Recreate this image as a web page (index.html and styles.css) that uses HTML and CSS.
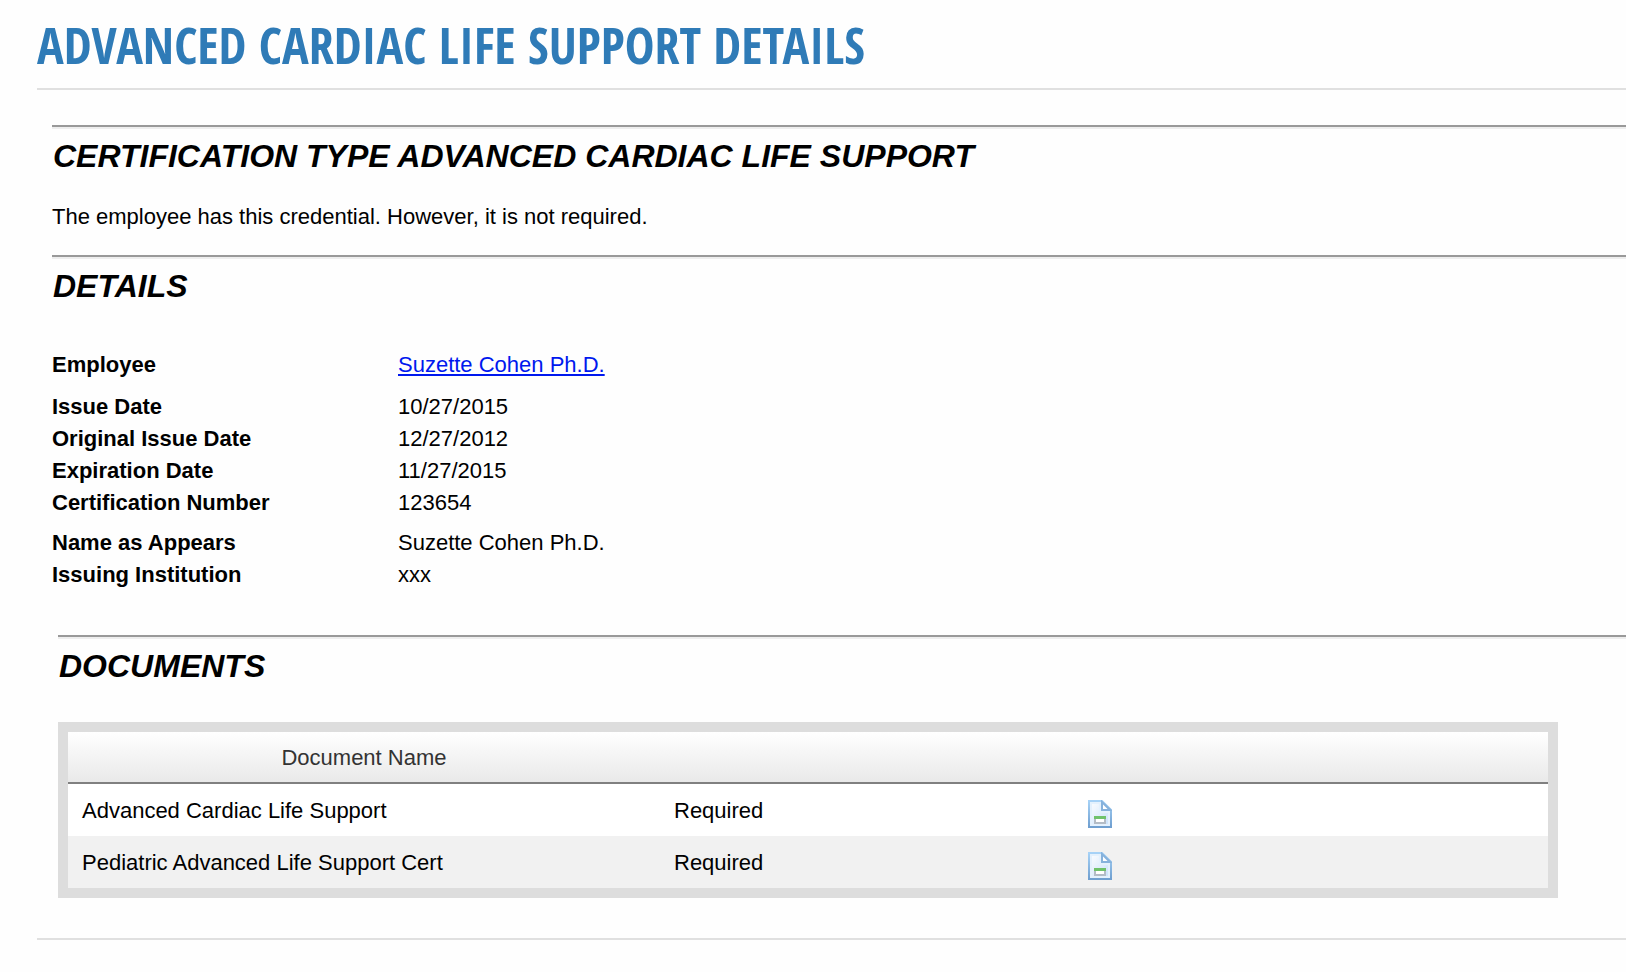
FILE: index.html
```html
<!DOCTYPE html>
<html lang="en">
<head>
    <meta charset="utf-8">
    <meta name="viewport" content="width=device-width, initial-scale=1.0">
    <title>Advanced Cardiac Life Support Details</title>
    <link rel="stylesheet" href="styles.css">
</head>
<body>
    <!-- shared icon, used once per document row -->
    <svg class="sprite" aria-hidden="true">
        <defs>
            <linearGradient id="edge" x1="0" y1="0" x2="0" y2="1">
                <stop offset="0" stop-color="#a6d2f7"/>
                <stop offset="1" stop-color="#6f9fd0"/>
            </linearGradient>
            <linearGradient id="sheet" x1="0" y1="0" x2="1" y2="1">
                <stop offset="0" stop-color="#ffffff"/>
                <stop offset="1" stop-color="#c4defa"/>
            </linearGradient>
        </defs>
        <symbol id="doc" viewBox="0 0 24 28">
            <path d="M1 1H14L23 10V27H1Z" fill="url(#sheet)" stroke="url(#edge)" stroke-width="2"/>
            <path d="M3 26V3H12V12H21V25H3" fill="none" stroke="#e4f1fd" stroke-width="2"/>
            <path d="M14 2V10H22Z" fill="#fff" stroke="#86b2dc" stroke-width="2"/>
            <rect x="7" y="17" width="10" height="6" fill="#fff" stroke="#b3bcc6" stroke-width="2"/>
            <rect x="6" y="16" width="12" height="3" fill="#6fc26b"/>
        </symbol>
    </svg>
    <div class="page">
        <h1 class="title">ADVANCED CARDIAC LIFE SUPPORT DETAILS</h1>
        <div class="content">
            <div class="section">
                <h2>CERTIFICATION TYPE ADVANCED CARDIAC LIFE SUPPORT</h2>
                <p>The employee has this credential. However, it is not required.</p>
            </div>
            <div class="section">
                <h2>DETAILS</h2>
                <dl class="details">
                    <div class="first"><dt>Employee</dt><dd><a href="#">Suzette Cohen Ph.D.</a></dd></div>
                    <div><dt>Issue Date</dt><dd>10/27/2015</dd></div>
                    <div><dt>Original Issue Date</dt><dd>12/27/2012</dd></div>
                    <div><dt>Expiration Date</dt><dd>11/27/2015</dd></div>
                    <div class="last"><dt>Certification Number</dt><dd>123654</dd></div>
                    <div><dt>Name as Appears</dt><dd>Suzette Cohen Ph.D.</dd></div>
                    <div><dt>Issuing Institution</dt><dd>xxx</dd></div>
                </dl>
            </div>
            <div class="section documents">
                <h2>DOCUMENTS</h2>
                <div class="grid">
                    <table>
                        <thead>
                            <tr><th class="name">Document Name</th><th class="status"></th><th></th></tr>
                        </thead>
                        <tbody>
                            <tr>
                                <td>Advanced Cardiac Life Support</td>
                                <td>Required</td>
                                <td><a href="#" aria-label="Open document"><svg class="icon"><use href="#doc"/></svg></a></td>
                            </tr>
                            <tr>
                                <td>Pediatric Advanced Life Support Cert</td>
                                <td>Required</td>
                                <td><a href="#" aria-label="Open document"><svg class="icon"><use href="#doc"/></svg></a></td>
                            </tr>
                        </tbody>
                    </table>
                </div>
            </div>
        </div>
    </div>
</body>
</html>
```
FILE: styles.css
```css
html,body,div,h1,h2,p,dl,dt,dd{margin:0;padding:0;}
*{box-sizing:border-box;}
body{font-family:"Liberation Sans", Arial, Helvetica, sans-serif;font-size:22px;line-height:32px;color:#000;background-color:#fefefe;}
a{color:#0018ee;}
.sprite{display:block;width:0;height:0;}
.page{margin-left:37px;padding-top:13px;}
.title{padding-bottom:11px;border-bottom:2px solid #e0e0e0;font-family:"Open Sans Condensed", "Liberation Sans Narrow", "Open Sans", sans-serif;font-size:50px;line-height:64px;font-weight:bold;color:#2f7bb7;}
.content{padding:35px 0 40px 15px;border-bottom:2px solid #e0e0e0;}

.section{border-top:2px solid #999;}
.section h2{padding:7px 0 0 1px;border-top:2px solid #eee;font-size:32px;line-height:40px;font-style:italic;font-weight:bold;}
.section p{padding:25px 0 22px;}

.details{padding:43px 0 44px;}
.details div{display:flex;}
.details dt{width:346px;font-weight:bold;}
.details .first{margin-bottom:10px;}
.details .last{margin-bottom:8px;}

.documents{margin-left:6px;}
.grid{margin:36px 68px 0 0;border:10px solid #ddd;}
.grid table{width:100%;border-collapse:separate;border-spacing:0;table-layout:fixed;}
.grid th{height:52px;padding:2px 0 0;border-bottom:2px solid #808080;font-weight:normal;color:#333;background:linear-gradient(#fff, #e9e9e9);}
.grid td{height:52px;padding:2px 14px 0;background-color:#fff;}
.grid tr:nth-child(even) td{background-color:#f1f1f1;}
.grid .name{width:40%;}
.grid .status{width:28%;}
.icon{display:block;width:24px;height:28px;margin-top:6px;}
```
